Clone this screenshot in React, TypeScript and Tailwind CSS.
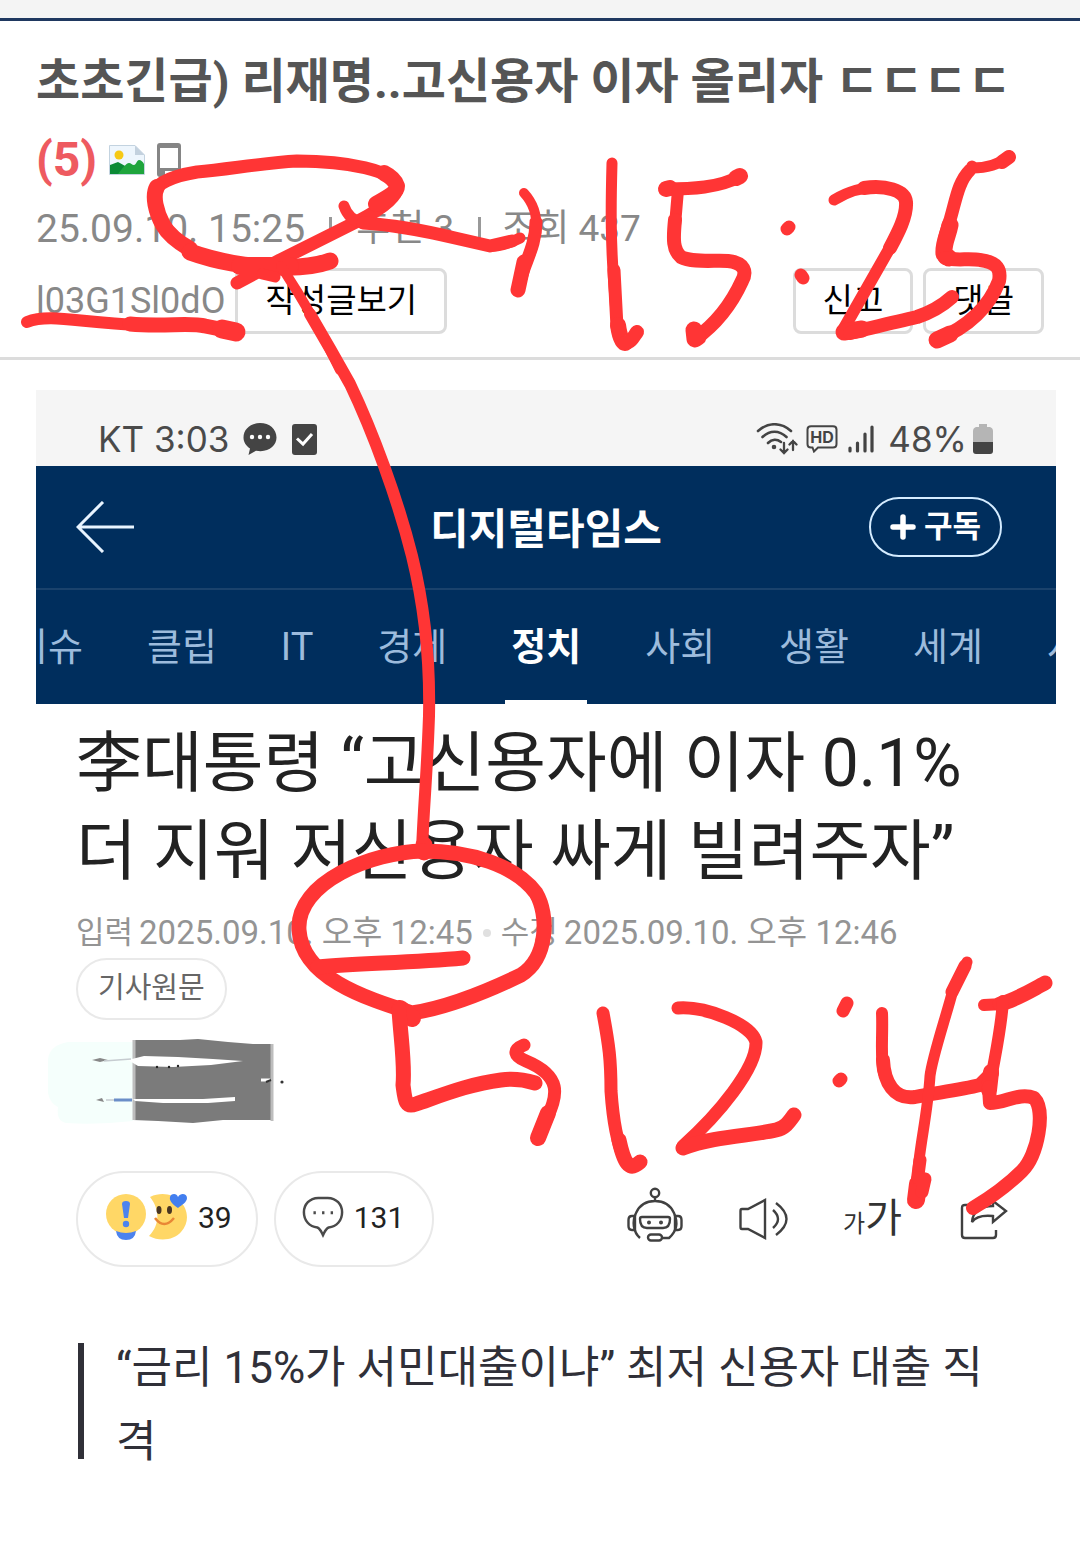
import React from 'react';

const tabs = ['이슈', '클립', 'IT', '경제', '정치', '사회', '생활', '세계', '사설'];

// 손글씨 획: [굵기, path]
const strokes: [number, string][] = [
  // 위쪽 동그라미와 화살표
  [13, 'M237 283L280 260L360 220C385 207 397 196 397 188C397 170 345 161 297 161C262 163 230 169 197 172C172 176 154 184 154 195C155 218 168 236 192 250'],
  [16, 'M376 204C390 196 397 192 397 186C395 180 390 176 384 173M157 187C152 196 156 212 163 225C168 234 178 242 190 249'],
  [17, 'M190 252C215 261 250 268 277 267C298 268 316 266 330 261'],
  [18, 'M240 266L290 266'],
  [11, 'M262 274L275 277'],
  [11, 'M344 206C347 215 353 221 363 223C395 225 430 232 455 238L490 246C500 247 512 242 520 238'],
  [13, 'M363 223C395 225 430 232 455 238L490 246L512 241'],
  [10, 'M524 193C534 204 537 216 536 228'],
  [13, 'M536 222C536 245 525 262 521 278'],
  [15, 'M524 262L518 290'],
  [12, 'M27 322C50 313 80 323 140 325C175 326 190 322 205 325'],
  [15, 'M130 324C165 327 190 322 205 326L225 330'],
  [19, 'M222 329L236 332'],
  // 아래로 내려오는 선
  [10, 'M281 266C302 298 322 332 340 370'],
  [12, 'M310 314C330 348 350 384 350 384C373 432 398 500 412 556C427 617 430 670 429 716C427 775 424 800 422 850'],
  [17, 'M424 845L424 852'],
  [15, 'M423 851C372 852 296 882 299 930C302 978 365 998 412 1013C450 1007 490 990 521 975C548 958 549 915 536 893C515 865 470 851 423 851'],
  [15, 'M318 967C360 963 410 963 463 958'],
  [18, 'M400 1009L412 1018'],
  [15, 'M399 1010C401 1040 405 1065 403 1085C405 1100 405 1108 416 1104C445 1094 470 1084 501 1080C515 1078 525 1080 535 1083'],
  [13, 'M524 1045C512 1050 514 1056 526 1061C562 1076 558 1095 547 1118'],
  [16, 'M548 1113L538 1138'],
  // 15:25
  [11, 'M612 163C611 200 610 240 615 300L617 327'],
  [13, 'M614 270L617 327'],
  [16, 'M618 325C620 340 624 343 625 343'],
  [14, 'M625 343C631 343 634 336 637 332'],
  [13, 'M666 189C690 189 720 188 740 176'],
  [16, 'M666 189L670 188M736 178L740 176'],
  [12, 'M678 190L675 225'],
  [14, 'M675 220C673 240 673 250 681 257C692 263 715 260 728 261C745 263 747 272 742 281C732 303 716 324 695 339'],
  [17, 'M698 337L695 339L694 330'],
  [13, 'M787 229L789 227M801 275L803 278'],
  [11, 'M834 200C850 190 866 187 880 187'],
  [14, 'M864 188C885 185 905 190 906 202C907 216 898 233 890 248'],
  [12, 'M892 244L843 330'],
  [17, 'M844 332L862 329'],
  [14, 'M850 333C875 327 895 322 917 317C932 312 942 306 952 297'],
  [11, 'M1008 157C998 165 986 168 972 168V166'],
  [14, 'M1009 157L1002 162'],
  [13, 'M970 170C958 182 956 200 950 220C945 235 942 243 945 256'],
  [17, 'M950 225C948 236 943 243 944 254L949 258'],
  [14, 'M945 258C955 261 970 258 980 260C998 262 1001 270 999 281C990 305 970 326 937 340'],
  [17, 'M950 334L937 340'],
  // 12:45
  [13, 'M603 1013C609 1045 611 1060 611 1091C613 1120 618 1145 624 1157'],
  [15, 'M619 1140C625 1168 631 1170 640 1162'],
  [13, 'M678 1008C705 1006 752 1024 756 1042C757 1068 718 1115 683 1146'],
  [15, 'M683 1148C715 1136 750 1136 776 1130C785 1128 789 1122 794 1115'],
  [13, 'M847 1003L843 1011M839 1081L841 1079'],
  [12, 'M882 1013C883 1035 880 1060 884 1073'],
  [14, 'M883 1060C884 1082 894 1100 915 1097C935 1093 960 1090 980 1085L992 1073'],
  [11, 'M967 962L953 990C945 1020 932 1058 930 1076C928 1110 920 1145 918 1170'],
  [13, 'M965 966L952 992M920 1160L916 1190'],
  [18, 'M918 1184L916 1200'],
  [13, 'M918 1178L925 1179L922 1192'],
  [12, 'M984 1005L1003 1004'],
  [15, 'M1000 1004C1016 1000 1030 991 1045 983'],
  [12, 'M1003 1001C1001 1030 996 1050 990 1085'],
  [16, 'M991 1072L989 1090'],
  [14, 'M989 1087L990 1103C1005 1103 1020 1092 1034 1098C1046 1110 1038 1155 1022 1171C1008 1185 990 1198 973 1208'],
];

function HandMarks() {
  return (
    <svg
      aria-hidden="true"
      width="1080"
      height="1550"
      viewBox="0 0 1080 1550"
      className="absolute left-0 top-0 pointer-events-none"
      fill="none"
      stroke="#ff3535"
      strokeLinecap="round"
      strokeLinejoin="round"
    >
      {strokes.map(([width, d]) => (
        <path key={d} d={d} strokeWidth={width} />
      ))}
    </svg>
  );
}

function PictureIcon() {
  return (
    <svg width="36" height="30" viewBox="0 0 36 30" className="shrink-0">
      <path d="M.5.5H26L35.500 10V29.500H.5Z" fill="#eef6fd" stroke="#c3d3e0" />
      <path d="M26 .5V10H35.500Z" fill="#c3d1de" />
      <circle cx="10" cy="10" r="4.500" fill="#f6c915" />
      <path d="M1 20L9 17L18 22V29H1Z" fill="#0b8a35" />
      <path d="M9 29C13 24 17 18 20 18C22 18 23 20 25 20C27 20 28 15 30 15C32 15 34 17 35 19V29Z" fill="#1fa53d" />
    </svg>
  );
}

function PhoneIcon() {
  return (
    <svg width="24" height="34" viewBox="0 0 24 34" className="shrink-0">
      <rect width="24" height="34" rx="3" fill="#858585" />
      <rect x="3" y="5" width="18" height="20" fill="#fff" />
      <rect x="8" y="28" width="8" height="3" fill="#fff" />
    </svg>
  );
}

function PostHeader() {
  return (
    <header className="border-b-3 border-[#dcdcdc] px-9 pt-[22px] pb-[22px]">
      <h1 className="text-[48px] leading-[78px] font-bold text-[#555]">
        초초긴급) 리재명..고신용자 이자 올리자 ㄷㄷㄷㄷ{' '}
        <span className="inline-flex items-center gap-3 align-top">
          <span className="text-[#ee5a60]">(5)</span>
          <PictureIcon />
          <PhoneIcon />
        </span>
      </h1>
      <div className="flex h-[60px] items-center text-[37px] text-[#888]">
        <span className="text-[39px]">25.09.10. 15:25</span>
        <i className="ml-6 mr-6 h-6 w-[3px] bg-[#999]" />
        <span>추천 3</span>
        <i className="ml-6 mr-5 h-6 w-[3px] bg-[#999]" />
        <span>조회 437</span>
      </div>
      <div className="mt-2 flex h-[68px] items-center gap-2.5">
        <span className="text-[36px] text-[#888]">l03G1Sl0dO</span>
        <button className="h-[66px] rounded-lg border-3 border-[#dcdcdc] px-[27px] text-[33px] text-black">작성글보기</button>
        <button className="ml-auto h-[66px] rounded-lg border-3 border-[#dcdcdc] px-[27px] text-[33px] text-black">신고</button>
        <button className="h-[66px] rounded-lg border-3 border-[#dcdcdc] px-[27px] text-[33px] text-black">댓글</button>
      </div>
    </header>
  );
}

function StatusBar() {
  return (
    <div className="flex h-[76px] items-center bg-[#f5f5f5] pl-[62px] pr-[63px] pt-[22px] font-[Inter,sans-serif] text-[35px] text-[#4a4a4a]">
      <span>KT 3:03</span>
      <svg width="34" height="34" viewBox="0 0 34 34" className="ml-3.5">
        <path d="M17 1C7.500 1 .5 7 .5 15.500C.5 20 3 24 7 26.500L5.500 33L13 28.700C25 31 33.500 24 33.500 15.500C33.500 7 26.500 1 17 1Z" fill="#444" />
        <circle cx="9" cy="15" r="2.200" fill="#fff" />
        <circle cx="17" cy="15" r="2.200" fill="#fff" />
        <circle cx="25" cy="15" r="2.200" fill="#fff" />
      </svg>
      <svg width="25" height="31" viewBox="0 0 25 31" className="ml-[15px]">
        <rect width="25" height="31" rx="3" fill="#444" />
        <path d="M5 14.500L11 20L20 10" fill="none" stroke="#fff" strokeWidth="3" />
      </svg>
      <svg width="42" height="32" viewBox="0 0 42 32" className="ml-auto" fill="none" stroke="#444" strokeWidth="2.600" strokeLinecap="round">
        <path d="M2 8C12-1 25-1 35 8M6.500 14C14 7 23 7 30.500 14M12 20C16 16 21 16 25 19" />
        <circle cx="18" cy="24" r="1" fill="#444" />
        <path d="M28 20V30M24.500 26.500L28 30L31.500 26.500M37 27V18M33.500 21.500L37 18L40.500 21.500" strokeWidth="2.300" />
      </svg>
      <svg width="32" height="28" viewBox="0 0 32 28" className="ml-2">
        <path d="M5 1.200H27Q30.500 1.200 30.500 4.500V19Q30.500 22.500 27 22.500H12L8 26.500L6.500 22.500H5Q1.500 22.500 1.500 19V4.500Q1.500 1.200 5 1.200Z" fill="none" stroke="#444" strokeWidth="2" />
        <text x="16" y="18" textAnchor="middle" fontSize="16" fontWeight="700" fill="#444">HD</text>
      </svg>
      <svg width="26" height="28" viewBox="0 0 26 28" className="ml-2.5" stroke="#444" strokeWidth="3.200" strokeLinecap="round">
        <path d="M2 23V26M9.500 18V26M17 9V26M24 2V26" />
      </svg>
      <span className="ml-3.5">48%</span>
      <svg width="20" height="30" viewBox="0 0 20 30" className="ml-1.5">
        <path d="M6 0H14V3H17Q20 4 20 7V18H0V7Q0 4 3 3H6Z" fill="#b5b5b5" />
        <path d="M0 18H20V27Q20 30 17 30H3Q0 30 0 27Z" fill="#444" />
      </svg>
    </div>
  );
}

function PressHeader() {
  return (
    <div className="bg-[#002e5d] text-white">
      <div className="grid h-[122px] grid-cols-[1fr_auto_1fr] items-center pl-10 pr-[54px]">
        <button aria-label="뒤로" className="justify-self-start">
          <svg width="60" height="52" viewBox="0 0 60 52" fill="none" stroke="#e8f4ff" strokeWidth="3">
            <path d="M27 1L2 26L27 51M2 26H58" />
          </svg>
        </button>
        <h2 className="pl-3.5 pt-1 text-[42px] font-bold">디지털타임스</h2>
        <button className="flex h-[60px] items-center gap-2 justify-self-end rounded-full border-2 border-[#d5ecff] px-[19px] text-[31px] font-bold">
          <svg width="26" height="26" viewBox="0 0 26 26" stroke="#fff" strokeWidth="5.500" strokeLinecap="round">
            <path d="M13 3V23M3 13H23" />
          </svg>
          구독
        </button>
      </div>
      <nav className="overflow-hidden border-t-2 border-[#1a426c]">
        <ul className="-ml-[23px] flex h-[114px] w-max gap-16 text-[38px] text-[#9dbbdc]">
          {tabs.map((tab) => (
            <li key={tab} className="relative flex items-center whitespace-nowrap">
              <a href="#" className={tab === '정치' ? 'font-bold text-white' : ''}>{tab}</a>
              {tab === '정치' && <i className="absolute -inset-x-1.5 bottom-0 h-1 bg-white" />}
            </li>
          ))}
        </ul>
      </nav>
    </div>
  );
}

// 지워진 기자 프로필 자국
function Smudge() {
  return (
    <svg width="240" height="90" viewBox="0 0 240 90" className="-ml-7 mt-[17px]">
      <path d="M85 5H20Q2 8 0 22V56Q2 66 10 70Q8 84 18 86Q50 88 85 84Z" fill="#f5fffc" />
      <path d="M85 3H132L150 2L180 5L205 7H225V83H175L145 86L110 84L85 83Z" fill="#7b7b7b" />
      <path d="M86 3V83M224 7V84" stroke="#bdbdbd" strokeWidth="3" />
      <path d="M80 23L96 19L130 20L165 22L195 24L163 28L125 30L90 29Z" fill="#fff" />
      <path d="M85 62H155L187 60V64L160 66H115L87 64Z" fill="#fff" />
      <path d="M44 23L52 21L60 23L52 25ZM48 63L54 61L56 65Z" fill="#888" />
      <path d="M56 24L83 22M58 63H70" stroke="#c6ccd0" strokeWidth="1.500" />
      <path d="M66 63H84" stroke="#6b8ec8" strokeWidth="3" />
      <path d="M213 43H222" stroke="#fff" strokeWidth="3" />
      <path d="M218 45L223 43" stroke="#333" strokeWidth="2" />
      <circle cx="109" cy="30" r="1.200" fill="#222" />
      <circle cx="121" cy="30" r="1.200" fill="#222" />
      <circle cx="130" cy="29" r="1.200" fill="#222" />
      <circle cx="234" cy="45" r="1.600" fill="#333" />
    </svg>
  );
}

function ReactionIcon() {
  return (
    <svg width="82" height="48" viewBox="0 0 82 48">
      <circle cx="20" cy="21" r="20" fill="#ffd766" />
      <path d="M10 38Q20 42 30 38Q29 47 20 47Q11 47 10 38Z" fill="#4c83ee" />
      <path d="M16 11Q16 8 20 8Q24 8 24 11L22 25H18Z" fill="#4c83ee" />
      <circle cx="20" cy="31" r="3.200" fill="#4c83ee" />
      <path d="M44 4C70-8 92 20 75 39C68 47 54 49 43 43C55 31 53 15 44 4Z" fill="#ffd766" />
      <ellipse cx="53" cy="17" rx="2.500" ry="4" fill="#493622" />
      <ellipse cx="63.500" cy="17" rx="2.500" ry="4" fill="#493622" />
      <path d="M49 25Q58 37 68 25" fill="none" stroke="#e98735" strokeWidth="2.500" />
      <path d="M72 15C65 10 62 6 65 2C68 0 71 1 72 4C75-1 81 1 81 5C81 9 76 12 72 15Z" fill="#427eef" />
    </svg>
  );
}

function ArticleTools() {
  return (
    <div className="mt-11 flex items-center pr-2">
      <button className="flex h-24 items-center gap-2.5 rounded-full border-2 border-[#e9e9e9] pl-7 pr-6 pb-1 text-[30px] text-[#222]">
        <ReactionIcon />
        39
      </button>
      <button className="ml-4 flex h-24 items-center gap-2.5 rounded-full border-2 border-[#e9e9e9] pl-[26px] pr-7 pb-1 text-[30px] text-[#222]">
        <svg width="42" height="42" viewBox="0 0 44 44" fill="none" stroke="#4a4a4a" strokeWidth="2.600">
          <path d="M17 2H27C36 2 42 9 42 17C42 26 36 32 28 33C25 34 24 37 22 41C20 37 19 34 16 33C8 32 2 26 2 17C2 9 8 2 17 2Z" />
          <path d="M12 17.500H14.500M21 17.500H23.500M30 17.500H32.500" strokeWidth="3" />
        </svg>
        131
      </button>
      <button aria-label="요약봇" className="ml-auto">
        <svg width="56" height="64" viewBox="0 0 56 64" fill="none" stroke="#404040" strokeWidth="2.400">
          <circle cx="28" cy="6" r="4.200" />
          <path d="M28 10V15M13 51C6 45 5 34 9 26C13 17 20 14 28 14C36 14 43 17 47 26C51 35 50 44 42 51H35" />
          <path d="M8 29H5Q1.500 29 1.500 33V39Q1.500 43 5 43H8ZM48 29H51Q54.500 29 54.500 33V39Q54.500 43 51 43H48Z" />
          <path d="M15 30H41Q43 30 43 32Q43 41 36 41H20Q13 41 13 32Q13 30 15 30Z" />
          <rect x="21" y="47.500" width="14" height="6" rx="3" />
          <circle cx="22" cy="35.500" r=".8" fill="#404040" />
          <circle cx="34" cy="35.500" r=".8" fill="#404040" />
        </svg>
      </button>
      <button aria-label="듣기" className="ml-14">
        <svg width="50" height="42" viewBox="0 0 50 42" fill="none" stroke="#404040" strokeWidth="2.400">
          <path d="M3 11H9L26 2V40L9 31H3Q1.500 31 1.500 29V13Q1.500 11 3 11Z" />
          <path d="M34 12Q44 21 34 30M37 5Q58 21 37 37" />
        </svg>
      </button>
      <button className="ml-[54px] flex items-baseline leading-[44px] text-[#333]">
        <span className="text-2xl">가</span>
        <span className="text-[40px]">가</span>
      </button>
      <button aria-label="공유" className="ml-[58px]">
        <svg width="48" height="42" viewBox="0 0 48 42" fill="none" stroke="#404040" strokeWidth="2.400">
          <path d="M13 7H5Q2 7 2 10V37Q2 40 5 40H33Q36 40 36 37V32" />
          <path d="M33 3L46 13L33 24V18C23 17 16 18 12 24C13 12 21 8 33 8Z" />
        </svg>
      </button>
    </div>
  );
}

function Article() {
  return (
    <article className="px-10 pt-4">
      <h3 className="text-[66px] leading-[88px] text-[#222] break-keep">
        李대통령 “고신용자에 이자 0.1% 더 지워 저신용자 싸게 빌려주자”
      </h3>
      <div className="mt-3.5 flex h-[46px] items-center gap-1.5 text-[33px] text-[#949494]">
        <span className="text-[31px]">입력</span>
        <span>2025.09.10. 오후 12:45</span>
        <i className="mx-1 size-2 rounded-full bg-[#e0e0e0]" />
        <span className="text-[31px]">수정</span>
        <span>2025.09.10. 오후 12:46</span>
      </div>
      <button className="mt-0.5 block h-[62px] rounded-full border-2 border-[#e9e9e9] px-5 text-[29px] text-[#666]">기사원문</button>
      <Smudge />
      <ArticleTools />
      <blockquote className="mt-[76px] mb-[90px] ml-0.5 flow-root border-l-6 border-[#303038] pl-8 text-[44px] leading-[74px] text-[#303038] break-all">
        <p className="-mt-3 -mb-5">“금리 15%가 서민대출이냐” 최저 신용자 대출 직격</p>
      </blockquote>
    </article>
  );
}

export default function App() {
  return (
    <div lang="ko" className="relative min-h-screen overflow-hidden bg-white font-[Roboto,'Noto_Sans_CJK_KR',sans-serif]">
      <div className="h-[21px] border-b-3 border-[#1f3860] bg-[#f4f4f4]" />
      <PostHeader />
      <main className="mt-[30px] ml-9 mr-6">
        <StatusBar />
        <PressHeader />
        <Article />
      </main>
      <HandMarks />
    </div>
  );
}
